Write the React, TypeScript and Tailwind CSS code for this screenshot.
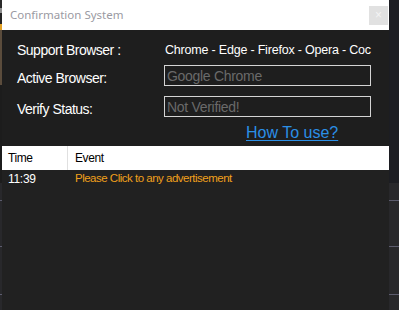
import React from 'react';

/* ─── Small helpers ─────────────────────────────────────────── */
function FieldBox({ text }: { text: string }) {
  return (
    <div className="w-[207px] h-[21px] border-[1.5px] border-[#d4d4d4] bg-[#1e1e1e] flex items-center px-[2px] overflow-hidden">
      <span className="text-[14px] leading-none text-[#6a6a6a] tracking-[-0.3px] whitespace-nowrap">{text}</span>
    </div>
  );
}

function SideStrip({ side }: { side: 'left' | 'right' }) {
  const top = side === 'left' ? (
    <div className="flex flex-col h-[183px]">
      <div className="h-[8px] bg-[#2a2a2a]" />
      <div className="h-[5px] bg-[#8d8d8d]" />
      <div className="h-[11px] bg-[#232323]" />
      <div className="h-[6px] bg-[#e3a125]" />
      <div className="h-[55px] bg-[#5b4c3c]" />
      <div className="flex-1 bg-[#1c1c1c]" />
    </div>
  ) : (
    <div className="h-[183px] bg-[#1c1d22]" />
  );
  return (
    <div className={side === 'left' ? 'w-[2px] flex flex-col' : 'w-[10px] flex flex-col'}>
      {top}
      <div className="flex-1 bg-[#28282b] flex flex-col">
        <div className="h-[17px]" />
        <div className="h-[1px] bg-[#5c5c6e]" />
        <div className="h-[45px]" />
        <div className="h-[1px] bg-[#5c5c6e]" />
        <div className="h-[47px]" />
        <div className="h-[1px] bg-[#5c5c6e]" />
      </div>
    </div>
  );
}

export default function App() {
  return (
    <div className="w-[399px] h-[310px] flex overflow-hidden bg-[#1c1c1c] font-['Liberation_Sans',Arial,sans-serif]">
      <SideStrip side="left" />

      {/* ── Window ── */}
      <div className="w-[387px] flex flex-col">
        {/* Title bar */}
        <div className="h-[30px] bg-white flex items-center justify-between pl-[8px] pr-[1px]">
          <span className="font-['Noto_Sans',sans-serif] text-[11.5px] text-[#9a9aa2]">Confirmation System</span>
          <div className="w-[19px] h-[19px] bg-[#e1e1e1] flex items-center justify-center text-[#f4f4f4] text-[12px] leading-none">×</div>
        </div>

        {/* Form area */}
        <div className="h-[116px] bg-[#1e1e1e] flex flex-col pt-[11px] text-white">
          <div className="flex items-center h-[18px]">
            <span className="w-[163px] pl-[15px] text-[14px] tracking-[-0.5px]">Support Browser :</span>
            <span className="text-[12.5px] whitespace-nowrap overflow-hidden w-[208px] tracking-[-0.2px]">Chrome - Edge - Firefox - Opera - Coc</span>
          </div>
          <div className="flex items-center h-[21px] mt-[6px]">
            <span className="w-[162px] pl-[15px] pt-[4px] leading-[16px] text-[14px] tracking-[-0.5px]">Active Browser:</span>
            <FieldBox text="Google Chrome" />
          </div>
          <div className="flex items-center h-[21px] mt-[10px]">
            <span className="w-[162px] pl-[15px] pt-[4px] leading-[16px] text-[14px] tracking-[-0.5px]">Verify Status:</span>
            <FieldBox text="Not Verified!" />
          </div>
          <div className="pl-[244px] mt-[4px]">
            <span className="text-[16px] leading-[20px] text-[#2b8fe6] underline underline-offset-[2px]">How To use?</span>
          </div>
        </div>

        {/* Table */}
        <div className="flex-1 bg-[#212121] flex flex-col text-[12px]">
          <div className="h-[24px] bg-white flex items-center text-black">
            <div className="w-[66px] pl-[6px] border-r-[1px] border-[#e0e0e0] h-full flex items-center tracking-[-0.4px]">Time</div>
            <div className="pl-[7px] tracking-[-0.4px]">Event</div>
          </div>
          <div className="h-[18px] flex items-center">
            <div className="w-[66px] pl-[6px] text-white tracking-[-0.3px]">11:39</div>
            <div className="pl-[7px] text-[11.5px] text-[#f0a01c] tracking-[-0.5px]">Please Click to any advertisement</div>
          </div>
        </div>
      </div>

      <SideStrip side="right" />
    </div>
  );
}
